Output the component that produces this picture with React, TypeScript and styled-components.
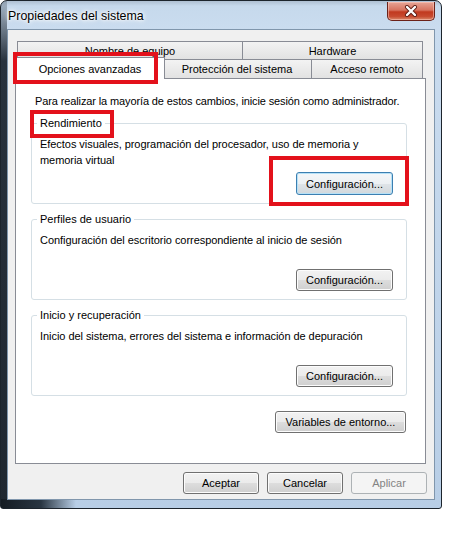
import React from "react";
import styled, { createGlobalStyle, css } from "styled-components";

const Global = createGlobalStyle`
  html, body { margin: 0; padding: 0; background: #ffffff; }
  body { font-family: "Liberation Sans", Arial, sans-serif; color: #000; }
`;

const Window = styled.div`
  position: relative;
  width: 442px;
  height: 509px;
  box-sizing: border-box;
  display: flex;
  flex-direction: column;
  border: 1px solid #1c242c;
  border-radius: 7px 7px 3px 3px;
  padding: 0 6px 8px 6px;
  background:
    linear-gradient(to right, #141b22 0, #2a3642 40px, rgba(150, 180, 210, 0) 75px) left bottom / 100% 9px no-repeat,
    linear-gradient(to bottom, rgba(35, 45, 56, 0.2) 0, #28323d 60px, #1f2730 100%) left 0 / 6px 100% no-repeat,
    linear-gradient(to bottom, #aebfd1 0, #c6d9ec 5px, #cadcef 28px, #b8cee6 100%);
`;

const TitleBar = styled.div`
  height: 28px;
  display: flex;
  align-items: flex-start;
  justify-content: space-between;
`;

const Title = styled.div`
  margin-top: 7px;
  padding-left: 1px;
  font-size: 12.4px;
  line-height: 16px;
  color: #000;
  text-shadow: 0 0 6px #fff, 0 0 4px #fff, 0 0 2px #fff;
`;

const CloseButton = styled.div`
  width: 48px;
  height: 19px;
  margin-top: 1px;
  box-sizing: border-box;
  border: 1px solid #6b2219;
  border-top: none;
  border-radius: 0 0 5px 5px;
  background: linear-gradient(to bottom, #e7a596 0, #d7735f 45%, #c1391f 55%, #c74a2f 80%, #d98a6c 100%);
  box-shadow: inset 0 0 0 1px rgba(255, 210, 200, 0.5);
  display: flex;
  align-items: center;
  justify-content: center;
`;

const Client = styled.div`
  flex: 1;
  display: flex;
  flex-direction: column;
  background: #f0f0f0;
  border: 1px solid #8096ac;
  padding: 11px 8px 5px 7px;
`;

const TabRow = styled.div`
  display: flex;
  margin: 0 3px 0 2px;
`;

const Tab = styled.div<{ $w: number; $h: number; $selected?: boolean }>`
  width: ${(p) => p.$w}px;
  height: ${(p) => p.$h}px;
  box-sizing: border-box;
  flex: none;
  border: 1px solid #898c95;
  border-bottom: none;
  margin-left: -1px;
  &:first-child { margin-left: 0; }
  display: flex;
  align-items: center;
  justify-content: center;
  font-size: 11px;
  background: linear-gradient(to bottom, #f3f3f3, #e2e2e2);
  ${(p) =>
    p.$selected &&
    css`
      position: relative;
      z-index: 1;
      background: #fff;
      margin: -2px -2px -1px -2px;
      &:first-child { margin-left: -2px; }
      height: ${p.$h + 3}px;
      width: ${p.$w + 4}px;
    `}
`;

const Panel = styled.div`
  flex: 1;
  display: flex;
  flex-direction: column;
  background: #fff;
  border: 1px solid #898c95;
  padding: 14px 18px 0 15px;
`;

const Intro = styled.div`
  font-size: 11px;
  letter-spacing: -0.12px;
  line-height: 16px;
  padding-left: 4px;
  white-space: nowrap;
`;

const Group = styled.div<{ $first?: boolean }>`
  position: relative;
  height: 81px;
  box-sizing: border-box;
  margin-top: ${(p) => (p.$first ? 14 : 15)}px;
  border: 1px solid #d5dfe5;
  border-radius: 3px;
  padding: 12px 13px 8px 8px;
  display: flex;
  flex-direction: column;
`;

const Legend = styled.span`
  position: absolute;
  top: -9px;
  left: 5px;
  padding: 0 3px;
  background: #fff;
  font-size: 11px;
  line-height: 16px;
`;

const Desc = styled.div`
  font-size: 11px;
  line-height: 16px;
  letter-spacing: -0.05px;
`;

const ButtonRow = styled.div`
  margin-top: auto;
  display: flex;
  justify-content: flex-end;
`;

const Button = styled.div<{ $w: number; $h?: number; $default?: boolean; $disabled?: boolean }>`
  width: ${(p) => p.$w}px;
  height: ${(p) => p.$h ?? 22}px;
  box-sizing: border-box;
  border: 1px solid #707070;
  border-radius: 3px;
  background: linear-gradient(to bottom, #f2f2f2 0%, #ebebeb 50%, #dddddd 51%, #cfcfcf 100%);
  box-shadow: inset 0 0 0 1px #fcfcfc;
  display: flex;
  align-items: center;
  justify-content: center;
  font-size: 11px;
  color: #000;
  ${(p) =>
    p.$default &&
    css`
      border-color: #3c7fb1;
      background: linear-gradient(to bottom, #f4f7f9 0%, #ecf0f3 50%, #dfe4e8 51%, #d2d8dc 100%);
      box-shadow: inset 0 0 0 1px #b6e1f7;
    `}
  ${(p) =>
    p.$disabled &&
    css`
      border-color: #adb2b5;
      background: #f4f4f4;
      box-shadow: none;
      color: #838383;
    `}
`;

const EnvRow = styled.div`
  margin-top: 15px;
  display: flex;
  justify-content: flex-end;
  margin-right: 1px;
`;

const FooterRow = styled.div`
  margin-top: 8px;
  margin-right: -1px;
  display: flex;
  justify-content: flex-end;
  gap: 8px;
`;

const Annotation = styled.div<{ $x: number; $y: number; $w: number; $h: number }>`
  position: absolute;
  left: ${(p) => p.$x}px;
  top: ${(p) => p.$y}px;
  width: ${(p) => p.$w}px;
  height: ${(p) => p.$h}px;
  box-sizing: border-box;
  border: 4px solid #e3111b;
  z-index: 5;
  pointer-events: none;
`;

const CloseX = () => (
  <svg width="14" height="12" viewBox="0 0 14 12">
    <path d="M3 2 L11 10 M11 2 L3 10" stroke="#5a1a12" strokeWidth="4" strokeLinecap="round" />
    <path d="M3 2 L11 10 M11 2 L3 10" stroke="#ffffff" strokeWidth="2.4" strokeLinecap="round" />
  </svg>
);

export default function App() {
  return (
    <>
      <Global />
      <Window>
        <TitleBar>
          <Title>Propiedades del sistema</Title>
          <CloseButton>
            <CloseX />
          </CloseButton>
        </TitleBar>
        <Client>
          <TabRow>
            <Tab $w={226} $h={18}>Nombre de equipo</Tab>
            <Tab $w={181} $h={18}>Hardware</Tab>
          </TabRow>
          <TabRow>
            <Tab $w={146} $h={19} $selected>Opciones avanzadas</Tab>
            <Tab $w={150} $h={19}>Protección del sistema</Tab>
            <Tab $w={112} $h={19}>Acceso remoto</Tab>
          </TabRow>
          <Panel>
            <Intro>Para realizar la mayoría de estos cambios, inicie sesión como administrador.</Intro>
            <Group $first>
              <Legend>Rendimiento</Legend>
              <Desc>
                Efectos visuales, programación del procesador, uso de memoria y
                <br />
                memoria virtual
              </Desc>
              <ButtonRow>
                <Button $w={97} $h={23} $default>Configuración...</Button>
              </ButtonRow>
            </Group>
            <Group>
              <Legend>Perfiles de usuario</Legend>
              <Desc>Configuración del escritorio correspondiente al inicio de sesión</Desc>
              <ButtonRow>
                <Button $w={97}>Configuración...</Button>
              </ButtonRow>
            </Group>
            <Group>
              <Legend>Inicio y recuperación</Legend>
              <Desc>Inicio del sistema, errores del sistema e información de depuración</Desc>
              <ButtonRow>
                <Button $w={97}>Configuración...</Button>
              </ButtonRow>
            </Group>
            <EnvRow>
              <Button $w={131}>Variables de entorno...</Button>
            </EnvRow>
          </Panel>
          <FooterRow>
            <Button $w={76}>Aceptar</Button>
            <Button $w={76}>Cancelar</Button>
            <Button $w={76} $disabled>Aplicar</Button>
          </FooterRow>
        </Client>
        <Annotation $x={12} $y={51} $w={145} $h={32} />
        <Annotation $x={29} $y={109} $w={84} $h={28} />
        <Annotation $x={268} $y={155} $w={140} $h={50} />
      </Window>
    </>
  );
}
